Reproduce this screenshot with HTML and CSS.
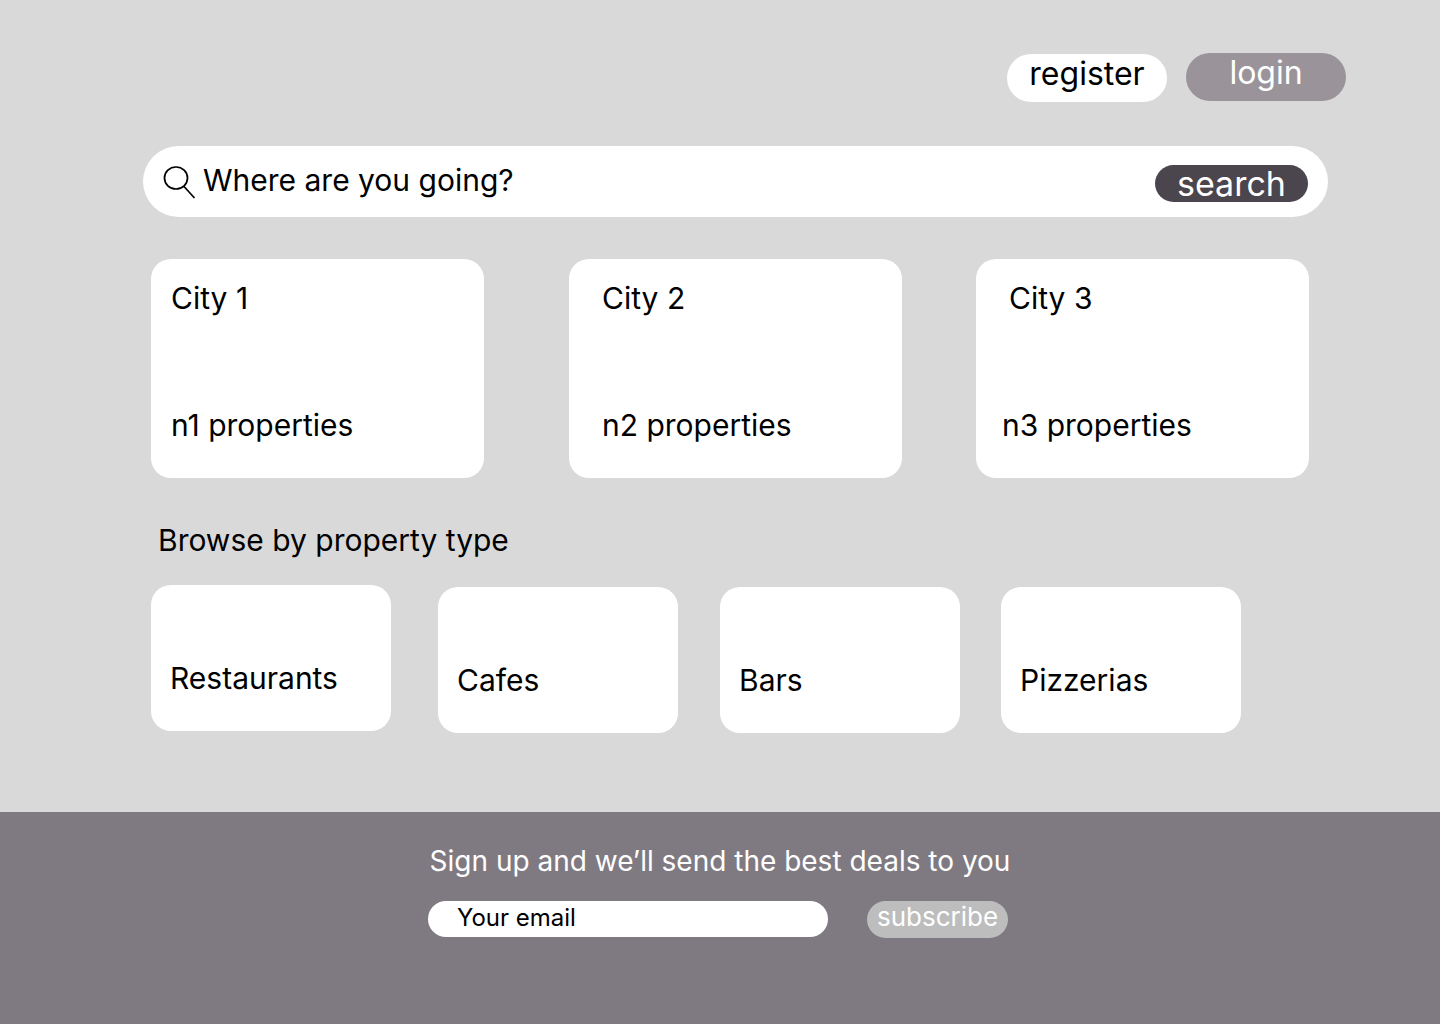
FILE: index.html
```html
<!DOCTYPE html>
<html lang="en">
<head>
<meta charset="utf-8">
<meta name="viewport" content="width=device-width, initial-scale=1">
<title>Find a place</title>
<link rel="stylesheet" href="styles.css">
</head>
<body>
<header class="topbar">
  <button class="pill pill-register" type="button">register</button>
  <button class="pill pill-login" type="button">login</button>
</header>
<main class="content">
  <form class="search">
    <svg class="search-icon" viewBox="0 0 32 32" aria-hidden="true"><ellipse cx="13" cy="12" rx="11.500" ry="11"/><path d="M20.800 20.200 31.500 32"/></svg>
    <input class="search-input" type="text" value="Where are you going?" aria-label="Destination">
    <button class="search-button" type="submit">search</button>
  </form>
  <section class="cities" aria-label="Cities">
    <article class="city city-first"><h2 class="label">City 1</h2><p class="label">n1 properties</p></article>
    <article class="city"><h2 class="label">City 2</h2><p class="label">n2 properties</p></article>
    <article class="city city-last"><h2 class="label">City 3</h2><p class="label">n3 properties</p></article>
  </section>
  <h2 class="label browse-title">Browse by property type</h2>
  <section class="types" aria-label="Property types">
    <a class="type type-first" href="#restaurants">Restaurants</a>
    <a class="type" href="#cafes">Cafes</a>
    <a class="type" href="#bars">Bars</a>
    <a class="type" href="#pizzerias">Pizzerias</a>
  </section>
</main>
<footer class="footer">
  <p class="footer-text">Sign up and we’ll send the best deals to you</p>
  <form class="signup">
    <input class="email" type="text" value="Your email" aria-label="Your email">
    <button class="subscribe" type="submit">subscribe</button>
  </form>
</footer>
</body>
</html>
```

FILE: styles.css
```css
* { box-sizing: border-box; }
body {
  margin: 0;
  min-height: 100vh;
  display: flex;
  flex-direction: column;
  background: #d9d9d9;
  color: #000;
  font-family: Inter, "Liberation Sans", sans-serif;
  font-size: 30px;
  line-height: 36px;
}
button, input { font: inherit; border: 0; padding: 0; margin: 0; }
h2, p { margin: 0; }
.label { font-size: 30px; font-weight: 400; line-height: 36px; }

.topbar {
  display: flex;
  justify-content: flex-end;
  gap: 19px;
  padding: 53px 94px 0 0;
}
.pill {
  width: 160px;
  height: 48px;
  border-radius: 24px;
  padding-bottom: 8px;
  font-size: 32px;
  line-height: 40px;
}
.pill-register { background: #fff; color: #000; margin-top: 1px; }
.pill-login { background: #9a949a; color: #fff; }

.content { padding: 44px 112px 0 143px; }
.search {
  display: flex;
  align-items: center;
  height: 71px;
  padding: 0 20px;
  border-radius: 36px;
  background: #fff;
}
.search-icon { width: 32px; height: 32px; fill: none; stroke: #000; stroke-width: 1.700; overflow: visible; }
.search-input { flex: 1; min-width: 0; margin-left: 8px; padding-bottom: 4px; background: transparent; color: #000; }
.search-button {
  width: 153px;
  height: 37px;
  margin-top: 4px;
  border-radius: 19px;
  background: #4b454d;
  color: #fff;
  font-size: 34px;
  line-height: 36px;
}

.cities {
  display: grid;
  grid-template-columns: 418fr 407fr 333fr;
  margin: 42px 19px 0 8px;
}
.city {
  display: flex;
  flex-direction: column;
  justify-content: space-between;
  width: 333px;
  height: 219px;
  padding: 21px 33px 35px;
  border-radius: 20px;
  background: #fff;
}
.city-first { padding-left: 20px; }
.city-last { padding-left: 26px; }
.city-last h2 { padding-left: 7px; }

.browse-title { margin: 44px 0 0 15px; }
.types {
  display: grid;
  grid-template-columns: 287fr 282fr 281fr 240fr;
  margin: 27px 87px 79px 8px;
}
.type {
  display: flex;
  align-items: flex-end;
  width: 240px;
  height: 146px;
  margin-top: 2px;
  padding: 0 19px 35px;
  border-radius: 20px;
  background: #fff;
  color: #000;
  text-decoration: none;
}
.type-first { margin-top: 0; }

.footer {
  flex: 1;
  display: flex;
  flex-direction: column;
  align-items: center;
  gap: 22px;
  padding: 32px 0 86px;
  background: #7f7a81;
  color: #fff;
}
.footer-text { font-size: 28px; line-height: 35px; }
.signup { display: flex; gap: 39px; padding-right: 4px; }
.email {
  width: 400px;
  height: 36px;
  padding: 0 29px 2px;
  border-radius: 18px;
  background: #fff;
  color: #000;
  font-size: 24px;
}
.subscribe {
  width: 141px;
  height: 37px;
  padding-bottom: 5px;
  border-radius: 19px;
  background: #bdbdbd;
  color: #fff;
  font-size: 26px;
  line-height: 32px;
}
```
